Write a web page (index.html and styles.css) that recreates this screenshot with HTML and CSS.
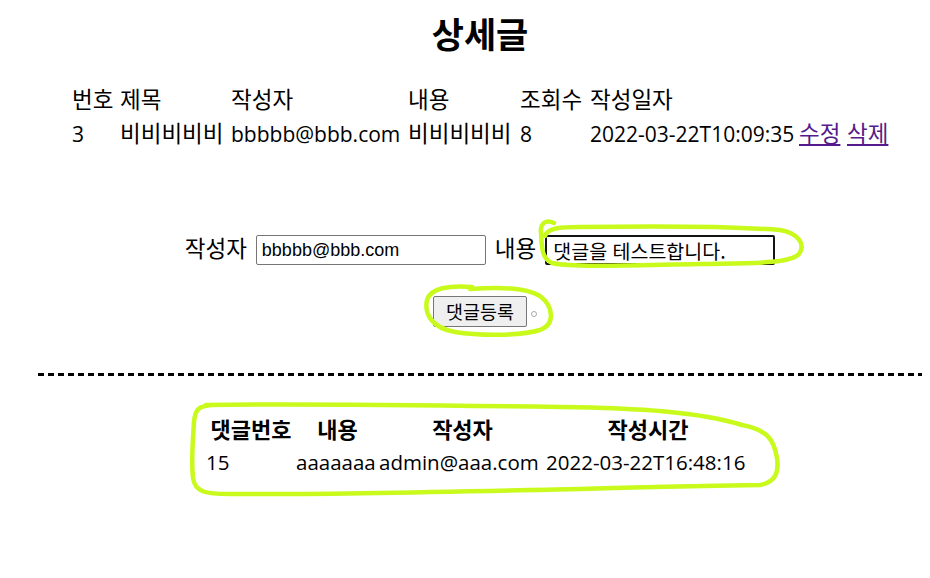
FILE: index.html
```html
<!DOCTYPE html>
<html lang="ko">
<head>
<meta charset="utf-8">
<title>상세글</title>
<link rel="stylesheet" href="styles.css">
</head>
<body>
<div class="page">
  <h1 class="title">상세글</h1>

  <table class="detail">
    <colgroup>
      <col class="c-no"><col class="c-title"><col class="c-writer"><col class="c-content"><col class="c-hits"><col class="c-date"><col class="c-edit"><col class="c-del">
    </colgroup>
    <tr class="head">
      <td>번호</td><td>제목</td><td>작성자</td><td>내용</td><td>조회수</td><td colspan="3">작성일자</td>
    </tr>
    <tr>
      <td>3</td><td class="ko">비비비비비</td><td>bbbbb@bbb.com</td><td class="ko">비비비비비</td><td>8</td><td>2022-03-22T10:09:35</td><td class="ko"><a href="#">수정</a></td><td class="ko"><a href="#">삭제</a></td>
    </tr>
  </table>

  <form class="reply-form">
    <div class="form-row">
      <label class="lbl">작성자</label>
      <input class="field" type="text" value="bbbbb@bbb.com">
      <label class="lbl">내용</label>
      <input class="field field-focus" type="text" value="댓글을 테스트합니다.">
    </div>
    <div class="btn-row">
      <span class="btn-wrap"><button class="btn" type="button">댓글등록</button></span>
    </div>
  </form>

  <div class="divider"></div>

  <table class="replies">
    <colgroup>
      <col class="r-no"><col class="r-content"><col class="r-writer"><col class="r-date">
    </colgroup>
    <tr>
      <th>댓글번호</th><th>내용</th><th>작성자</th><th>작성시간</th>
    </tr>
    <tr>
      <td>15</td><td>aaaaaaa</td><td>admin@aaa.com</td><td>2022-03-22T16:48:16</td>
    </tr>
  </table>

  <svg class="marks" width="930" height="578" viewBox="0 0 930 578">
    <path d="M554 223 C546 219 540 223 541 233 C542 246 541 258 552 263 C575 268 640 265 700 264 C750 263 790 264 799 254 C806 244 798 233 780 230 C730 226 650 226 580 227 C560 227 547 228 545 236" />
    <path d="M472 287 C450 285 430 288 427 300 C424 314 432 328 455 332 C480 336 520 336 540 330 C556 324 553 306 540 296 C525 287 495 287 470 289" />
    <path d="M206 405 C260 404 420 405 560 407 C640 408 700 412 742 425 C768 430 774 440 777 458 C779 472 776 482 760 485 C700 486 640 487 580 489 C480 491 330 495 230 494 C205 494 195 492 193 478 C191 460 193 438 194 422 C195 410 198 406 212 405" />
  </svg>
</div>
</body>
</html>
```

FILE: styles.css
```css
html, body {
  margin: 0;
  padding: 0;
  background: #ffffff;
}

body {
  font-family: "Open Sans", "Noto Sans CJK KR", sans-serif;
  font-size: 21px;
  color: #000000;
}

.page {
  position: relative;
  width: 930px;
  height: 578px;
  display: flex;
  flex-direction: column;
}

.title {
  margin: 13px 0 0 0;
  padding-left: 30px;
  text-align: center;
  font-family: "Noto Sans CJK KR", sans-serif;
  font-size: 35px;
  font-weight: 700;
  line-height: 40px;
}

.detail {
  margin: 30px 0 0 72px;
  border-collapse: collapse;
  table-layout: fixed;
  width: 823px;
}

.detail td {
  padding: 0;
  height: 34px;
  line-height: 34px;
  white-space: nowrap;
  text-align: left;
}

.detail .head td,
.detail .ko {
  font-size: 22.5px;
}

.c-no { width: 48px; }
.c-title { width: 111px; }
.c-writer { width: 177px; }
.c-content { width: 112px; }
.c-hits { width: 70px; }
.c-date { width: 209px; }
.c-edit { width: 48px; }
.c-del { width: 48px; }

.detail a {
  color: #551a8b;
  text-decoration: underline;
}

.reply-form {
  margin: 84px 0 0 0;
  padding-left: 30px;
  display: flex;
  flex-direction: column;
  align-items: center;
}

.form-row {
  display: flex;
  align-items: center;
  height: 30px;
}

.lbl {
  font-family: "Noto Sans CJK KR", sans-serif;
  font-size: 22.5px;
  line-height: 30px;
  margin-right: 9px;
  position: relative;
  top: -3px;
}

.field {
  box-sizing: border-box;
  width: 230px;
  height: 30px;
  margin: 0 9px 0 0;
  padding: 0 5px;
  border: 1px solid #767676;
  border-radius: 2px;
  font-family: "Liberation Sans", "Noto Sans CJK KR", sans-serif;
  font-size: 18px;
  color: #000000;
  background: #ffffff;
}

.field-focus {
  margin-right: 0;
  border: 2px solid #141414;
  padding: 0 6px;
  font-family: "Noto Sans CJK KR", sans-serif;
  font-size: 19.5px;
}

.btn-row {
  margin-top: 31px;
  display: flex;
  justify-content: center;
}

.btn-wrap {
  position: relative;
  display: inline-block;
}

.btn-wrap::after {
  content: "";
  position: absolute;
  left: 98px;
  top: 15px;
  width: 4px;
  height: 4px;
  border: 1px solid #a9a9a9;
  border-radius: 50%;
}

.btn {
  box-sizing: border-box;
  width: 94px;
  height: 31px;
  padding: 0;
  border: 1px solid #767676;
  border-radius: 2px;
  background: #efefef;
  font-family: "Noto Sans CJK KR", sans-serif;
  font-size: 18.5px;
  color: #000000;
  line-height: 29px;
}

.divider {
  margin: 46px 0 0 38px;
  width: 884px;
  height: 3px;
  background: repeating-linear-gradient(to right, #000000 0, #000000 6px, transparent 6px, transparent 10px);
}

.replies {
  margin: 37px 0 0 206px;
  border-collapse: collapse;
  table-layout: fixed;
  width: 544px;
}

.replies th,
.replies td {
  padding: 0;
  height: 33px;
  line-height: 33px;
  white-space: nowrap;
}

.replies th {
  font-size: 22px;
  font-weight: 700;
  text-align: center;
}

.replies td {
  font-size: 20.5px;
  text-align: left;
}

.r-no { width: 90px; }
.r-content { width: 83px; }
.r-writer { width: 167px; }
.r-date { width: 204px; }

.marks {
  position: absolute;
  left: 0;
  top: 0;
  pointer-events: none;
}

.marks path {
  fill: none;
  stroke: #c8fa1c;
  stroke-width: 4.5px;
  stroke-linecap: round;
  stroke-linejoin: round;
}
```
